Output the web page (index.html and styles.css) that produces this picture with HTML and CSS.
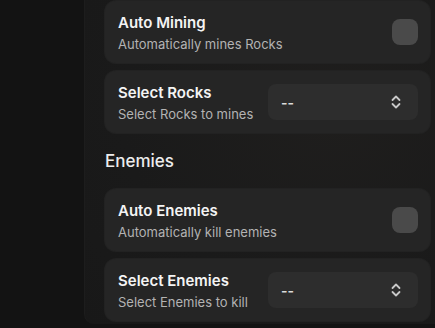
FILE: index.html
```html
<!DOCTYPE html>
<html>
<head>
<meta charset="utf-8">
<link rel="stylesheet" href="styles.css">
</head>
<body>
<div class="app">
  <div class="side"></div>
  <div class="panel">
    <div class="card first">
      <div class="text">
        <div class="title">Auto Mining</div>
        <div class="sub">Automatically mines Rocks</div>
      </div>
      <div class="toggle"></div>
    </div>
    <div class="card">
      <div class="text">
        <div class="title">Select Rocks</div>
        <div class="sub">Select Rocks to mines</div>
      </div>
      <div class="select">
        <span class="val">--</span>
        <svg class="chev" width="10" height="18" viewBox="0 0 10 18"><path d="M1.5 7 L5 3.5 L8.5 7 M1.5 11 L5 14.5 L8.5 11" fill="none" stroke="#c8c8c8" stroke-width="1.8" stroke-linecap="round" stroke-linejoin="round"/></svg>
      </div>
    </div>
    <div class="heading">Enemies</div>
    <div class="card">
      <div class="text">
        <div class="title">Auto Enemies</div>
        <div class="sub">Automatically kill enemies</div>
      </div>
      <div class="toggle"></div>
    </div>
    <div class="card">
      <div class="text">
        <div class="title">Select Enemies</div>
        <div class="sub">Select Enemies to kill</div>
      </div>
      <div class="select">
        <span class="val">--</span>
        <svg class="chev" width="10" height="18" viewBox="0 0 10 18"><path d="M1.5 7 L5 3.5 L8.5 7 M1.5 11 L5 14.5 L8.5 11" fill="none" stroke="#c8c8c8" stroke-width="1.8" stroke-linecap="round" stroke-linejoin="round"/></svg>
      </div>
    </div>
  </div>
</div>
</body>
</html>
```
FILE: styles.css
```css
html, body {
  margin: 0;
  padding: 0;
  background: #131313;
  font-family: Inter, "Liberation Sans", sans-serif;
  width: 435px;
  height: 328px;
  overflow: hidden;
}
.app {
  display: flex;
  align-items: flex-start;
  height: 328px;
}
.side {
  width: 84px;
  flex: none;
}
.panel {
  flex: 1;
  background: radial-gradient(ellipse at 70% 35%, #1f1e1d 0%, #1a1a1a 60%, #181818 100%);
  border-left: 1px solid #1d1d1d;
  border-bottom-left-radius: 10px;
  padding: 1px 5px 3px 20px;
  display: flex;
  flex-direction: column;
  gap: 8px;
}
.card {
  height: 62px;
  box-sizing: border-box;
  background: #252525;
  border-radius: 11px;
  padding: 0 12px 0 13px;
  display: flex;
  align-items: center;
  box-shadow: 0 0 0 1px #222;
}
.text {
  display: flex;
  flex-direction: column;
  gap: 2px;
  padding-top: 1px;
}
.title {
  font-size: 15px;
  line-height: 20px;
  font-weight: 600;
  color: #f4f4f4;
}
.sub {
  font-size: 13px;
  line-height: 18px;
  color: #b3b3b3;
}
.toggle {
  margin-left: auto;
  width: 26px;
  height: 26px;
  border-radius: 8px;
  background: #4a4a4a;
}
.select {
  margin-left: auto;
  width: 150px;
  height: 36px;
  box-sizing: border-box;
  border-radius: 8px;
  background: #2d2d2d;
  display: flex;
  align-items: center;
  padding: 0 17px 0 13px;
}
.val {
  font-size: 14px;
  color: #dcdcdc;
  font-weight: 600;
}
.chev {
  margin-left: auto;
}
.heading {
  font-size: 17px;
  line-height: 24px;
  font-weight: 500;
  color: #ededed;
  margin: 8px 0 8px 0;
}
```
